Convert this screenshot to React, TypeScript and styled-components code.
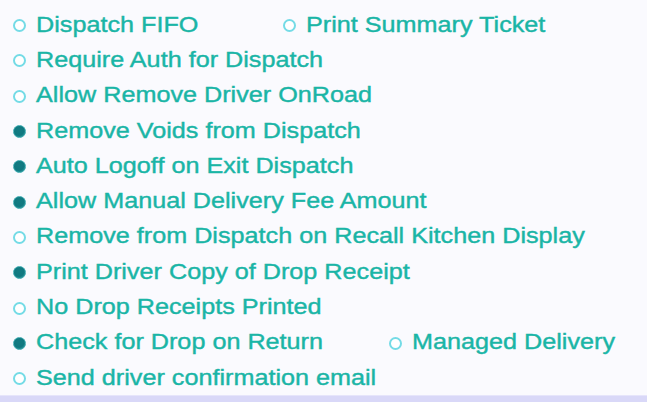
import * as React from "react";
import styled, { createGlobalStyle } from "styled-components";

const GlobalStyle = createGlobalStyle`
  html, body {
    margin: 0;
    padding: 0;
    background: #fafafe;
  }
`;

const StyledPanel = styled.div`
  width: 647px;
  height: 402px;
  display: flex;
  flex-direction: column;
  background: #fafafe;
  overflow: hidden;
`;

const StyledList = styled.div`
  flex: 1;
  display: flex;
  flex-direction: column;
  padding: 7px 0 0 13px;
`;

const StyledRow = styled.div`
  height: 35.3px;
  display: flex;
  align-items: center;
`;

const StyledOption = styled.div<{ $width?: number }>`
  display: flex;
  align-items: center;
  width: ${(p) => (p.$width ? `${p.$width}px` : "auto")};
  flex-shrink: 0;
`;

const StyledRadio = styled.div<{ $checked: boolean }>`
  width: 13px;
  height: 13px;
  border-radius: 50%;
  box-sizing: border-box;
  flex-shrink: 0;
  margin-top: 2px;
  border: ${(p) => (p.$checked ? "1px solid #3aa9ae" : "2px solid #74dbe6")};
  background: ${(p) =>
    p.$checked
      ? "radial-gradient(circle at 45% 40%, #137b82 0%, #0f7880 55%, #3ea9ae 100%)"
      : "#ffffff"};
`;

const StyledLabel = styled.span`
  display: inline-block;
  margin-left: 10px;
  font-family: "Liberation Sans", Arial, sans-serif;
  font-size: 22px;
  line-height: 24px;
  color: #1ab5a6;
  -webkit-text-stroke: 0.4px #1ab5a6;
  white-space: nowrap;
  transform: scaleX(1.145);
  transform-origin: left center;
`;

const StyledFooter = styled.div`
  height: 6px;
  background: #d9d8f8;
  border-top: 1px solid #e6e5fb;
`;

type Opt = { label: string; checked: boolean; width?: number };

const rows: Opt[][] = [
  [
    { label: "Dispatch FIFO", checked: false, width: 270 },
    { label: "Print Summary Ticket", checked: false },
  ],
  [{ label: "Require Auth for Dispatch", checked: false }],
  [{ label: "Allow Remove Driver OnRoad", checked: false }],
  [{ label: "Remove Voids from Dispatch", checked: true }],
  [{ label: "Auto Logoff on Exit Dispatch", checked: true }],
  [{ label: "Allow Manual Delivery Fee Amount", checked: true }],
  [{ label: "Remove from Dispatch on Recall Kitchen Display", checked: false }],
  [{ label: "Print Driver Copy of Drop Receipt", checked: true }],
  [{ label: "No Drop Receipts Printed", checked: false }],
  [
    { label: "Check for Drop on Return", checked: true, width: 376 },
    { label: "Managed Delivery", checked: false },
  ],
  [{ label: "Send driver confirmation email", checked: false }],
];

const App = () => {
  return (
    <>
      <GlobalStyle />
      <StyledPanel>
        <StyledList>
          {rows.map((row, i) => (
            <StyledRow key={i}>
              {row.map((opt) => (
                <StyledOption key={opt.label} $width={opt.width}>
                  <StyledRadio $checked={opt.checked} />
                  <StyledLabel>{opt.label}</StyledLabel>
                </StyledOption>
              ))}
            </StyledRow>
          ))}
        </StyledList>
        <StyledFooter />
      </StyledPanel>
    </>
  );
};

export default App;
